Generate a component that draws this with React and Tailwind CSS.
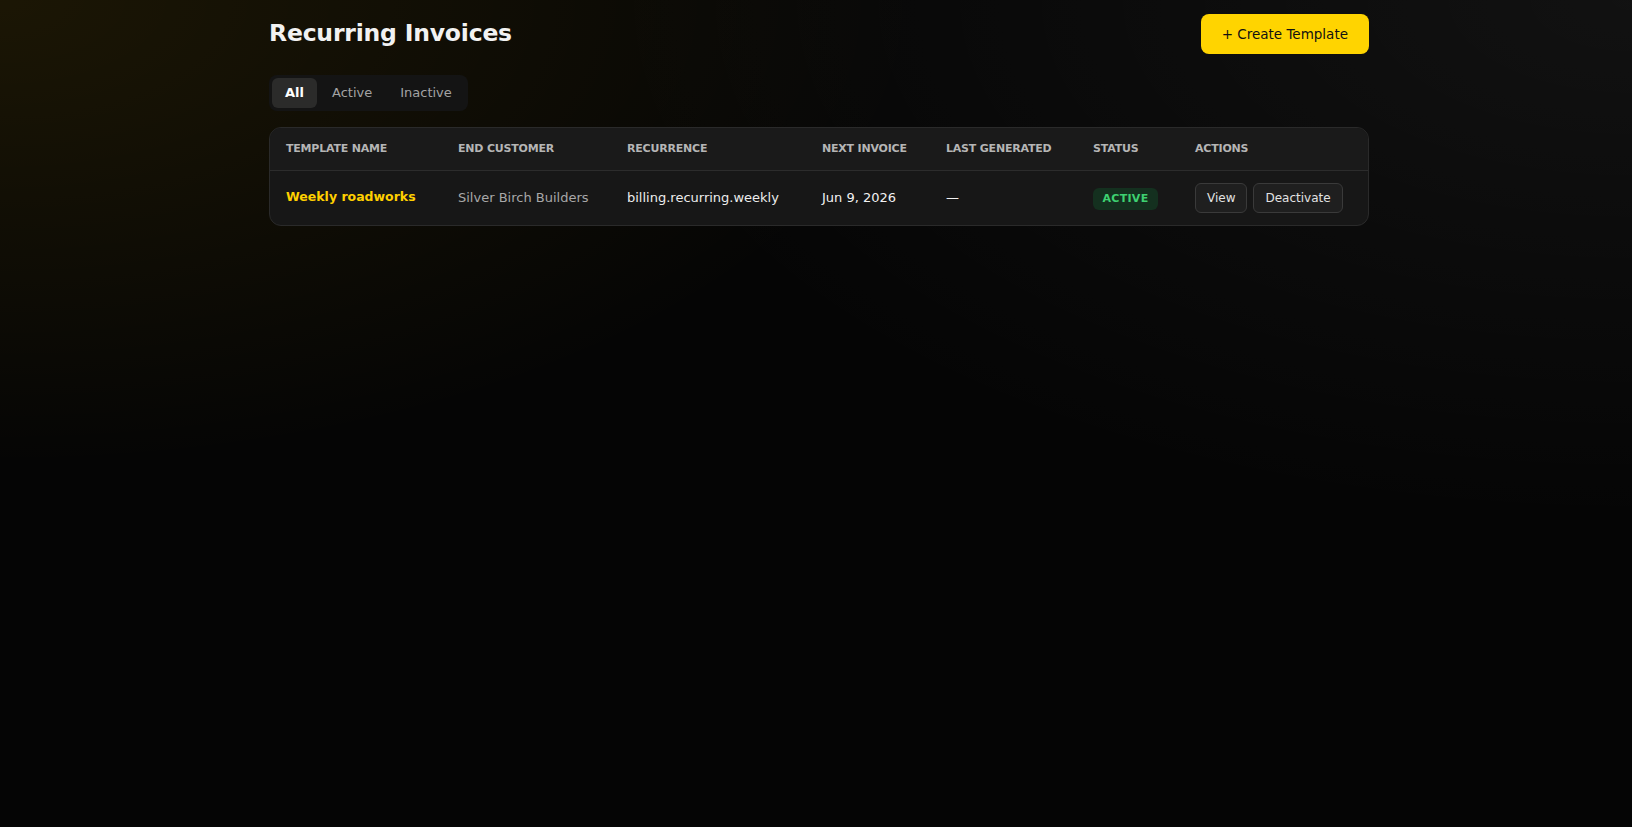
import React, { useState } from 'react';

const templates = [
  {
    id: 1,
    name: 'Weekly roadworks',
    customer: 'Silver Birch Builders',
    recurrence: 'billing.recurring.weekly',
    nextInvoice: 'Jun 9, 2026',
    lastGenerated: null,
    active: true,
  },
];

const columns = [
  { label: 'Template Name', width: 'w-[172px]' },
  { label: 'End Customer', width: 'w-[169px]' },
  { label: 'Recurrence', width: 'w-[195px]' },
  { label: 'Next Invoice', width: 'w-[124px]' },
  { label: 'Last Generated', width: 'w-[147px]' },
  { label: 'Status', width: 'w-[102px]' },
  { label: 'Actions', width: '' },
];

const tabs = ['All', 'Active', 'Inactive'];

function RecurringInvoices() {
  const [tab, setTab] = useState('All');

  const rows = templates.filter((t) => {
    if (tab === 'Active') return t.active;
    if (tab === 'Inactive') return !t.active;
    return true;
  });

  return (
    <div className="min-h-screen bg-[#050505] bg-[radial-gradient(ellipse_at_0%_0%,rgba(255,196,0,0.09),transparent_40%),radial-gradient(ellipse_at_100%_0%,rgba(255,255,255,0.05),transparent_45%)] pl-[6px] font-['DejaVu_Sans',sans-serif] text-[#ececec]">
      <div className="mx-auto w-[1100px] pt-[14px]">
        {/* Header */}
        <div className="flex items-center justify-between">
          <h1 className="-mt-[2px] text-[23.5px] font-bold leading-[32px] tracking-[-0.2px] text-[#f2f2f2]">
            Recurring Invoices
          </h1>
          <button className="h-[40px] rounded-lg bg-[#ffd400] px-[21px] text-[13.5px] font-medium text-[#111]">
            + Create Template
          </button>
        </div>

        {/* Filter tabs */}
        <div className="mt-[21px] inline-flex gap-0.5 rounded-lg bg-[#141414] p-[3px]">
          {tabs.map((t) => (
            <button
              key={t}
              onClick={() => setTab(t)}
              className={
                tab === t
                  ? 'h-[30px] rounded-md bg-[#2b2b2a] px-[13px] text-[13px] font-bold text-white'
                  : 'h-[30px] rounded-md px-[13px] text-[13px] text-[#a3a3a3]'
              }
            >
              {t}
            </button>
          ))}
        </div>

        {/* Templates table */}
        <div className="mt-[16px] overflow-hidden rounded-xl border border-[#2a2a2a] bg-[#171717]">
          <table className="w-full table-fixed border-collapse text-left">
            <thead className="bg-[#1a1a1a]">
              <tr className="border-b border-[#2c2c2c]">
                {columns.map((c) => (
                  <th
                    key={c.label}
                    className={`${c.width} h-[42px] px-4 text-[11px] font-bold uppercase tracking-[-0.2px] text-[#b5b5b5]`}
                  >
                    {c.label}
                  </th>
                ))}
              </tr>
            </thead>
            <tbody>
              {rows.map((r) => (
                <tr key={r.id}>
                  <td className="h-[55px] px-4 text-[12.5px] font-bold text-[#ffd000]">{r.name}</td>
                  <td className="px-4 text-[13px] text-[#a8a8a8]">{r.customer}</td>
                  <td className="px-4 text-[13px] text-[#ececec]">{r.recurrence}</td>
                  <td className="px-4 text-[13px] text-[#f2f2f2]">{r.nextInvoice}</td>
                  <td className="px-4 text-[13px] text-[#f2f2f2]">{r.lastGenerated || '—'}</td>
                  <td className="px-4">
                    <span className="inline-flex h-[22px] w-[65px] items-center justify-center rounded-md bg-[#14301f] text-[11px] font-bold tracking-[0.3px] text-[#3ed071]">
                      {r.active ? 'ACTIVE' : 'INACTIVE'}
                    </span>
                  </td>
                  <td className="px-4">
                    <div className="flex gap-1.5">
                      <button className="h-[30px] rounded-md border border-[#3a3a3a] bg-[#1f1f1f] px-[11px] text-[12px] text-[#e2e2e2]">
                        View
                      </button>
                      <button className="h-[30px] rounded-md border border-[#3a3a3a] bg-[#1f1f1f] px-[11px] text-[12px] text-[#e2e2e2]">
                        {r.active ? 'Deactivate' : 'Activate'}
                      </button>
                    </div>
                  </td>
                </tr>
              ))}
            </tbody>
          </table>
        </div>
      </div>
    </div>
  );
}

export default function App() {
  return <RecurringInvoices />;
}
